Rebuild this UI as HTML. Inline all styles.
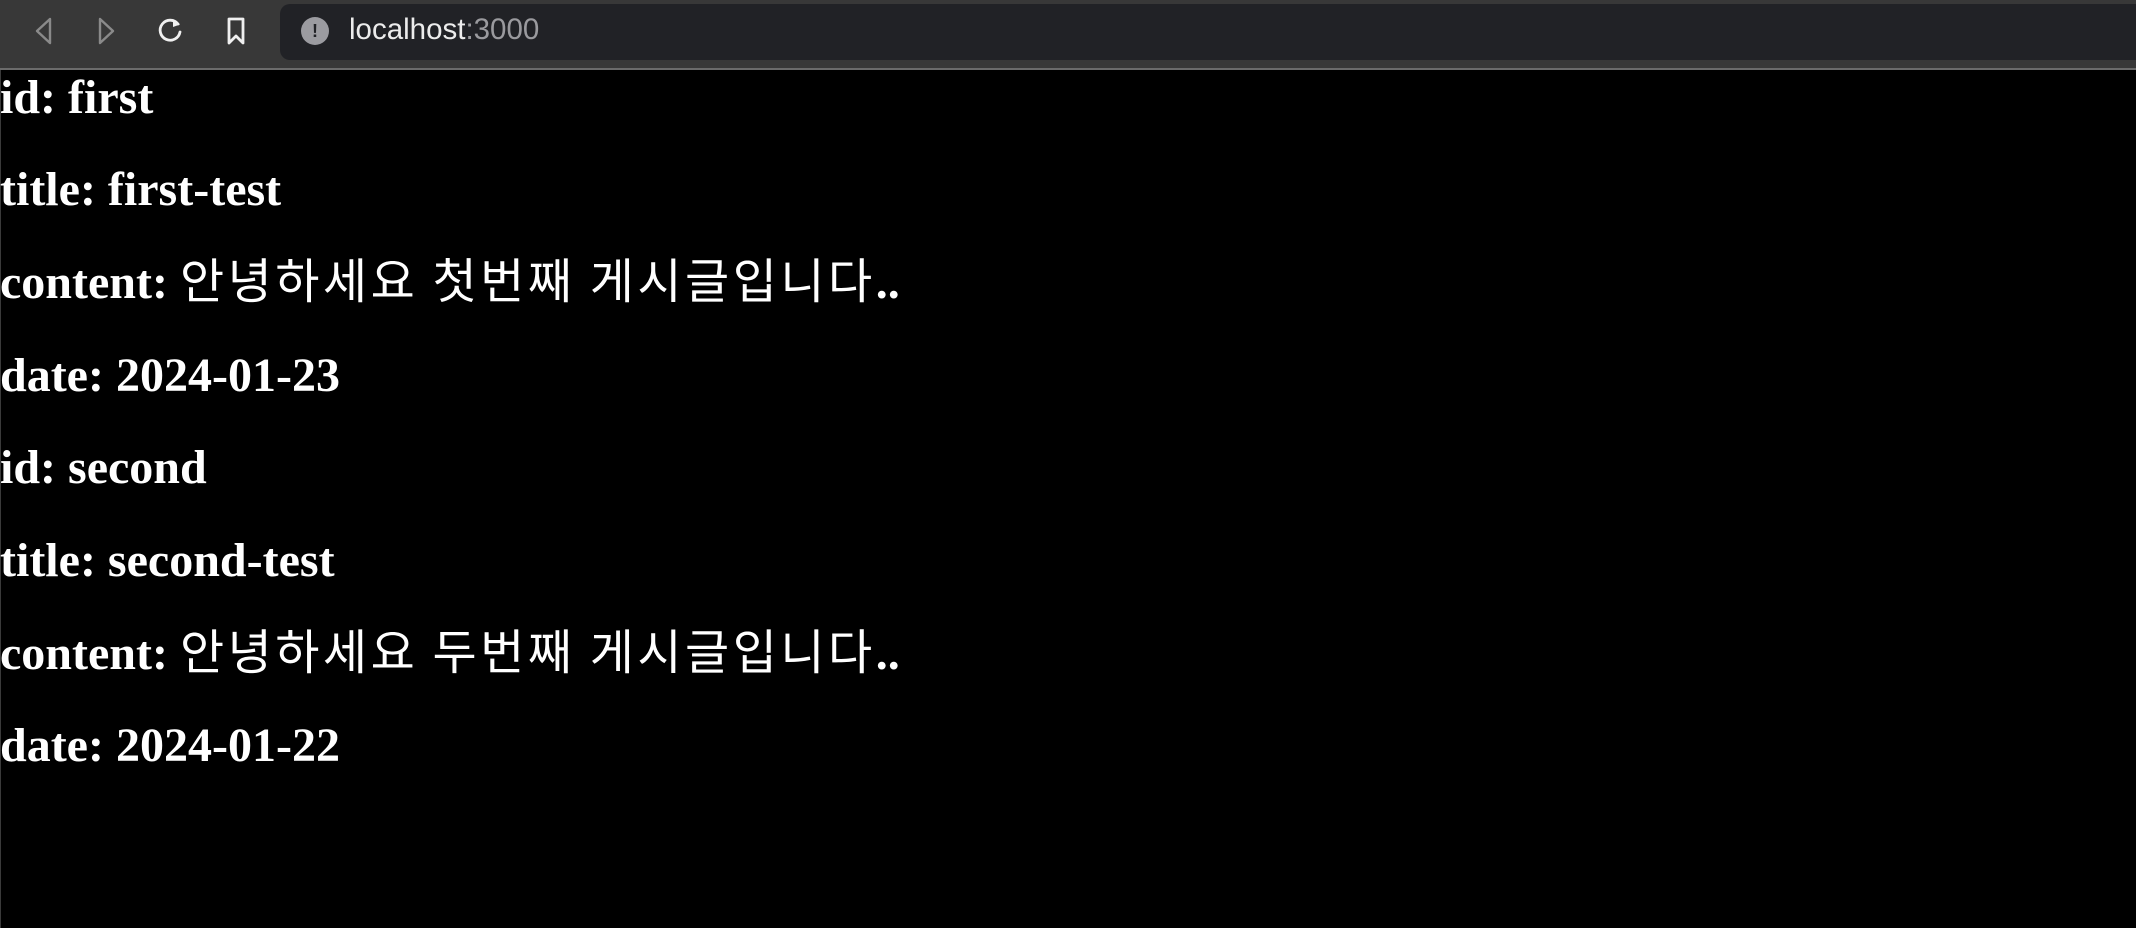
<!DOCTYPE html>
<html><head><meta charset="utf-8"><style>
html,body{margin:0;padding:0;width:2136px;height:928px;background:#000;overflow:hidden}
.tb{position:absolute;left:0;top:0;width:2136px;height:68px;background:#383838;border-bottom:2px solid #6b6b6b}
.url{position:absolute;left:280px;top:4px;width:1870px;height:56px;background:#212226;border-radius:10px}
.info{position:absolute;left:301px;top:17px;width:28px;height:28px;border-radius:50%;background:#9b9ba0;color:#212226;font:bold 18px "Liberation Sans",sans-serif;text-align:center;line-height:28px}
.ut{position:absolute;left:349px;top:13px;font:29.5px "Liberation Sans",sans-serif;color:#ececec;white-space:nowrap}
.ut span{color:#9a9a9e}
.l{position:absolute;left:0;height:92.7px;line-height:92.7px;font:bold 48px "Liberation Serif",serif;color:#fff;white-space:nowrap}
.k{font-family:"Noto Sans CJK KR","Liberation Serif",sans-serif;font-weight:400;letter-spacing:3.5px;line-height:0}
.lb{position:absolute;left:0;top:70px;width:1px;height:858px;background:#3a3a3a}
svg{position:absolute}
</style></head><body>
<div class="tb"></div>
<svg style="left:28px;top:15px" width="32" height="32" viewBox="0 0 32 32"><path d="M22 4 L9 16 L22 28 Z" fill="none" stroke="#8a8a8a" stroke-width="2.4" stroke-linejoin="round"/></svg>
<svg style="left:90px;top:15px" width="32" height="32" viewBox="0 0 32 32"><path d="M10 4 L23 16 L10 28 Z" fill="none" stroke="#8a8a8a" stroke-width="2.4" stroke-linejoin="round"/></svg>
<svg style="left:154px;top:15px" width="32" height="32" viewBox="0 0 32 32"><path d="M24 9 A10 10 0 1 0 26 17" fill="none" stroke="#f0f0f0" stroke-width="2.8" stroke-linecap="round"/><path d="M19 4 L26 9.5 L19 12 Z" fill="#f0f0f0"/></svg>
<svg style="left:220px;top:15px" width="32" height="32" viewBox="0 0 32 32"><path d="M9 4 H23 V28 L16 21 L9 28 Z" fill="none" stroke="#f0f0f0" stroke-width="2.8" stroke-linejoin="round"/></svg>
<div class="url"></div>
<div class="info">!</div>
<div class="ut">localhost<span>:3000</span></div>
<div class="lb"></div>
<div class="l" style="top:69.5px">id: first</div>
<div class="l" style="top:162.2px">title: first-test</div>
<div class="l" style="top:254.9px">content: <span class="k">안녕하세요 첫번째 게시글입니다</span>..</div>
<div class="l" style="top:347.6px">date: 2024-01-23</div>
<div class="l" style="top:440.3px">id: second</div>
<div class="l" style="top:533px">title: second-test</div>
<div class="l" style="top:625.7px">content: <span class="k">안녕하세요 두번째 게시글입니다</span>..</div>
<div class="l" style="top:718.4px">date: 2024-01-22</div>
</body></html>
